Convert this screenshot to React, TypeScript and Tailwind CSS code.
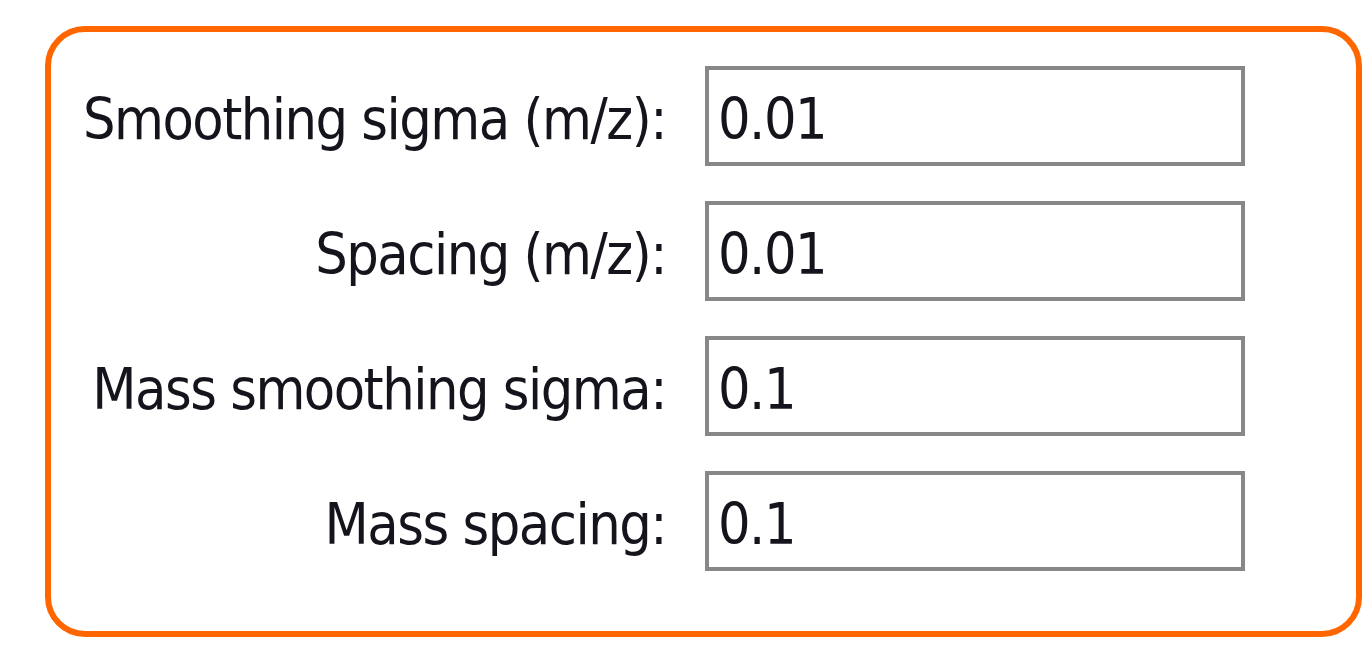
import React from 'react';

const fields = [
  { label: 'Smoothing sigma (m/z):', value: '0.01' },
  { label: 'Spacing (m/z):', value: '0.01' },
  { label: 'Mass smoothing sigma:', value: '0.1' },
  { label: 'Mass spacing:', value: '0.1' },
];

export default function App() {
  return (
    <div className="w-[1371px] h-[649px] bg-white overflow-hidden pt-[26px] pl-[45px]">
      <div
        className="w-[1317px] h-[611px] border-[6px] border-[#ff6600] rounded-[40px] pt-[34px] text-[57px] tracking-[-1.5px] text-[#14141c]"
        style={{ fontFamily: '"DejaVu Sans Condensed", "DejaVu Sans", sans-serif' }}
      >
        <div className="grid grid-cols-[617px_540px] gap-x-[37px] gap-y-[35px]">
          {fields.map((f) => (
            <React.Fragment key={f.label}>
              <div className="h-[100px] flex items-center justify-end pt-[6px] pr-[2px] leading-none whitespace-nowrap">
                {f.label}
              </div>
              <div className="h-[100px] border-[4px] border-[#878787] bg-white flex items-center pt-[6px] pl-[9px] leading-none">
                {f.value}
              </div>
            </React.Fragment>
          ))}
        </div>
      </div>
    </div>
  );
}
